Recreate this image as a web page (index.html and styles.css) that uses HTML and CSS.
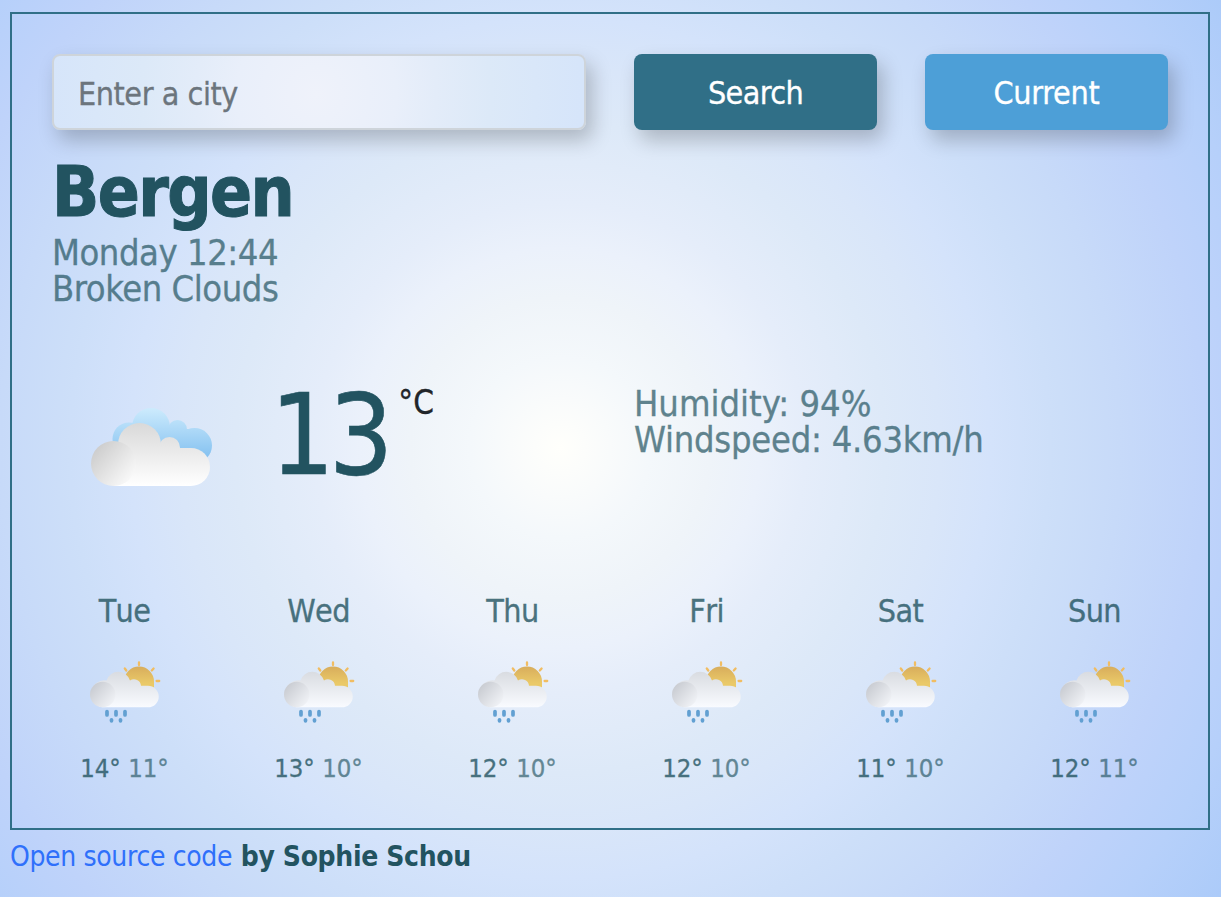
FILE: index.html
```html
<!DOCTYPE html>
<html lang="en">
<head>
<meta charset="utf-8">
<title>Weather</title>
<link rel="stylesheet" href="styles.css">
</head>
<body>
<svg class="defs" width="0" height="0" aria-hidden="true">
  <defs>
    <linearGradient id="cloud" gradientUnits="userSpaceOnUse" x1="0" y1="15" x2="0" y2="78"><stop offset="0" stop-color="#d9d9d9"/><stop offset="1" stop-color="#fff"/></linearGradient>
    <linearGradient id="cloud-cool" x1="0" y1="0" x2="0" y2="1"><stop offset="0" stop-color="#d9dce1"/><stop offset="1" stop-color="#f9fbff"/></linearGradient>
    <linearGradient id="puff" x1=".15" y1=".15" x2=".9" y2=".8"><stop offset="0" stop-color="#cecece"/><stop offset="1" stop-color="#f8f8f8"/></linearGradient>
    <linearGradient id="puff-cool" x1=".15" y1=".15" x2=".9" y2=".8"><stop offset="0" stop-color="#cacdd3"/><stop offset="1" stop-color="#eff1f5"/></linearGradient>
    <linearGradient id="blue" gradientUnits="userSpaceOnUse" x1="0" y1="0" x2="0" y2="50"><stop offset="0" stop-color="#cdebfd"/><stop offset="1" stop-color="#84c1f0"/></linearGradient>
    <linearGradient id="sun" x1="0" y1="0" x2="0" y2="1"><stop offset="0" stop-color="#d8ad5c"/><stop offset=".8" stop-color="#eac968"/></linearGradient>
    <symbol id="shower" viewBox="0 0 72 64">
      <path d="M34 20.500A15 15 0 0 1 64 20.500V26.500H40Z" fill="url(#sun)"/>
      <path d="M49 1.500v2.500M34.800 7.500l1.500 2M63.600 7.500l-1.800 2M69.200 20h-2.600" stroke="#f1bd62" stroke-width="2.300" stroke-linecap="round"/>
      <path d="M12.500 46.300A12.500 12.500 0 0 1 16.500 19.500A12.300 12.300 0 0 1 40 19.500A7 7 0 0 1 51 24.800H58A10.750 10.750 0 0 1 58 46.300Z" fill="url(#cloud-cool)"/>
      <circle cx="12.700" cy="33.500" r="12.700" fill="url(#puff-cool)"/>
      <path d="M17 50.500v3.500M26 50.500v3.500M35 50.500v3.500M21.500 58.800v1M30.500 58.800v1" stroke="#62a0d2" stroke-width="3.700" stroke-linecap="round"/>
    </symbol>
  </defs>
</svg>
<main class="card">
  <form class="search">
    <input class="city-input" type="text" placeholder="Enter a city">
    <button class="btn btn-search" type="button">Search</button>
    <button class="btn btn-current" type="button">Current</button>
  </form>
  <header class="place">
    <h1>Bergen</h1>
    <p class="when">Monday 12:44</p>
    <p class="sky">Broken Clouds</p>
  </header>
  <section class="now">
    <svg class="now-icon" viewBox="0 0 122 79" aria-hidden="true">
      <g fill="url(#blue)">
        <circle cx="38" cy="31" r="16.500"/><circle cx="60" cy="19" r="19"/><circle cx="86.500" cy="21.500" r="9.500"/><circle cx="103.500" cy="37.500" r="17.500"/>
        <path d="M40 21H104V50H40Z"/>
      </g>
      <g fill="url(#cloud)">
        <circle cx="48.500" cy="36.500" r="21.500"/><circle cx="78.500" cy="39.500" r="10.500"/>
        <rect x="20" y="40" width="99" height="38" rx="19"/>
        <rect x="22" y="60" width="40" height="18"/>
      </g>
      <circle cx="22.500" cy="55.500" r="22.500" fill="url(#puff)"/>
    </svg>
    <div class="temp"><span class="degrees">13</span><span class="unit">°C</span></div>
    <ul class="facts">
      <li class="humidity">Humidity: 94%</li>
      <li class="wind">Windspeed: 4.63km/h</li>
    </ul>
  </section>
  <section class="forecast">
    <div class="day"><h2>Tue</h2><svg class="day-icon"><use href="#shower"/></svg><p><b>14°</b> <span>11°</span></p></div>
    <div class="day"><h2>Wed</h2><svg class="day-icon"><use href="#shower"/></svg><p><b>13°</b> <span>10°</span></p></div>
    <div class="day"><h2>Thu</h2><svg class="day-icon"><use href="#shower"/></svg><p><b>12°</b> <span>10°</span></p></div>
    <div class="day"><h2>Fri</h2><svg class="day-icon"><use href="#shower"/></svg><p><b>12°</b> <span>10°</span></p></div>
    <div class="day"><h2>Sat</h2><svg class="day-icon"><use href="#shower"/></svg><p><b>11°</b> <span>10°</span></p></div>
    <div class="day"><h2>Sun</h2><svg class="day-icon"><use href="#shower"/></svg><p><b>12°</b> <span>11°</span></p></div>
  </section>
</main>
<footer class="credit"><a>Open source code</a> <strong>by Sophie Schou</strong></footer>
</body>
</html>
```

FILE: styles.css
```css
* { box-sizing: border-box; margin: 0; padding: 0; }
body {
  height: 897px;
  padding: 12px 11px 0 10px;
  overflow: hidden;
  font-family: Tahoma, "DejaVu Sans Condensed", "DejaVu Sans", sans-serif;
  color: #225360;
  background: radial-gradient(circle at 560px 448px, #fffffb 0, #f9fbfb 50px, #f4f8fb 90px, #eff4f9 150px, #ebf1fb 200px, #e5edfa 245px, #dde9f8 325px, #d9e6f9 380px, #d4e3fb 430px, #cddff9 490px, #c7daf9 560px, #bfd3fa 645px, #b6d0fa 720px, #accbf9 798px);
}
.defs { position: absolute; }
.card {
  height: 818px;
  padding: 40px;
  border: 2px solid #306f87;
}
.search {
  display: grid;
  grid-template-columns: 534px 243px 243px;
  column-gap: 48px;
  height: 76px;
}
.city-input, .btn {
  height: 76px;
  border-radius: 8px;
  font: 32px/38px Tahoma, "DejaVu Sans Condensed", "DejaVu Sans", sans-serif;
  box-shadow: 6px 10px 20px rgba(0, 0, 0, .22);
}
.city-input {
  padding: 3px 24px 0;
  border: 2px solid #ced4da;
  letter-spacing: -.45px;
  background: radial-gradient(circle at 262px 38px, #eff2fa 0, #e9effa 80px, #e3ecf9 120px, #dce9f8 175px, #d6e5fa 265px);
}
.city-input::placeholder { color: #6c757d; opacity: 1; -webkit-text-stroke: .3px #6c757d; }
.btn { padding-top: 1px; border: 0; color: #fff; letter-spacing: -.6px; -webkit-text-stroke: .3px #fff; }
.btn-search { background: #306f87; }
.btn-current { background: #4d9fd7; letter-spacing: -.3px; }
.place { padding-top: 20px; }
h1 { font-size: 69px; line-height: 84px; letter-spacing: -1.6px; -webkit-text-stroke: 1px #225360; }
.when, .sky, .facts { font-size: 36px; line-height: 36px; color: #225360; -webkit-text-stroke: .3px #225360; }
.when, .sky { letter-spacing: -.45px; opacity: .7; }
.when { margin-top: 1px; }
.now {
  display: grid;
  grid-template-columns: 218px 364px 1fr;
  height: 210px;
  margin-top: 74px;
}
.now-icon { width: 122px; height: 79px; margin: 27px 0 0 39px; overflow: visible; }
.temp { display: flex; align-items: flex-start; }
.degrees { font-size: 113px; line-height: 108px; letter-spacing: -6px; -webkit-text-stroke: .6px #225360; }
.unit { padding-top: 3px; font-size: 33px; line-height: 38px; color: #212529; margin-left: 11px; -webkit-text-stroke: .3px #212529; }
.facts { list-style: none; opacity: .7; letter-spacing: -.25px; padding-top: 5px; }
.humidity { letter-spacing: 0; }
.forecast {
  display: grid;
  grid-template-columns: repeat(6, 194px);
  margin: 0 -24px;
  text-align: center;
}
.day { padding-right: 1px; }
.day h2 { padding-top: 1px; font-size: 32px; line-height: 38px; font-weight: 400; font-kerning: none; opacity: .8; letter-spacing: -.6px; -webkit-text-stroke: .3px #225360; }
.day-icon { display: block; width: 72px; height: 64px; margin: 31px auto 27px; position: relative; left: 1px; }
.day p { font-size: 25.5px; line-height: 32px; -webkit-text-stroke: .3px #225360; }
.day b { font-weight: 400; opacity: .8; }
.day span { opacity: .65; }
.credit { padding-top: 10px; font-size: 28px; line-height: 34px; letter-spacing: -.35px; }
.credit a { margin-right: 1px; color: #2f70fb; }
```
